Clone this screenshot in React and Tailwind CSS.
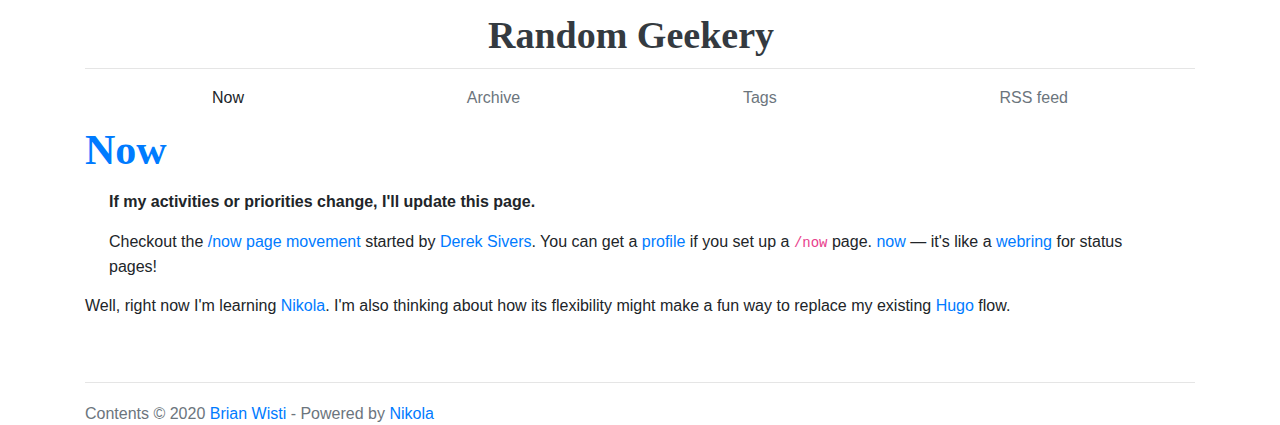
export default function App() {
  const link = 'text-[#007bff]';
  return (
    <div className="min-h-screen bg-white font-['Liberation_Sans',Arial,sans-serif] text-[16px] leading-6 text-[#212529]">
      <div className="mx-auto w-[1110px]">
        {/* Header */}
        <header className="border-b border-[#e5e5e5] pt-[15px] pb-[13px] pr-[18px] text-center">
          <a className="font-['Liberation_Serif','Times_New_Roman',serif] text-[38px] font-bold leading-[40px] text-[#343a40]">
            Random Geekery
          </a>
        </header>

        {/* Nav */}
        <nav className="flex justify-between px-[119px] pt-[17px] pb-[15px]">
          <a className="px-2 text-[#212529]">Now</a>
          <a className="px-2 text-[#6c757d]">Archive</a>
          <a className="px-2 text-[#6c757d]">Tags</a>
          <a className="px-2 text-[#6c757d]">RSS feed</a>
        </nav>

        {/* Main */}
        <main>
          <h1 className="font-['Liberation_Serif','Times_New_Roman',serif] text-[42px] font-bold leading-[50px] text-[#007bff]">
            Now
          </h1>
          <blockquote className="mx-6 mt-[15px]">
            <p className="mb-4 font-bold">If my activities or priorities change, I'll update this page.</p>
            <p className="mb-[15px]">
              Checkout the <a className={link}>/now page movement</a> started by{' '}
              <a className={link}>Derek Sivers</a>. You can get a <a className={link}>profile</a> if you set up a{' '}
              <code className="font-['Liberation_Mono','Courier_New',monospace] text-[14px] text-[#e83e8c]">/now</code> page.{' '}
              <a className={link}>now</a> — it's like a <a className={link}>webring</a> for status pages!
            </p>
          </blockquote>
          <p>
            Well, right now I'm learning <a className={link}>Nikola</a>. I'm also thinking about how its flexibility
            might make a fun way to replace my existing <a className={link}>Hugo</a> flow.
          </p>
        </main>

        {/* Footer */}
        <footer className="mt-[64px] border-t border-[#e5e5e5] pt-[19px] pb-4 text-[#6c757d]">
          Contents © 2020 <a className={link}>Brian Wisti</a> - Powered by <a className={link}>Nikola</a>
        </footer>
      </div>
    </div>
  );
}
